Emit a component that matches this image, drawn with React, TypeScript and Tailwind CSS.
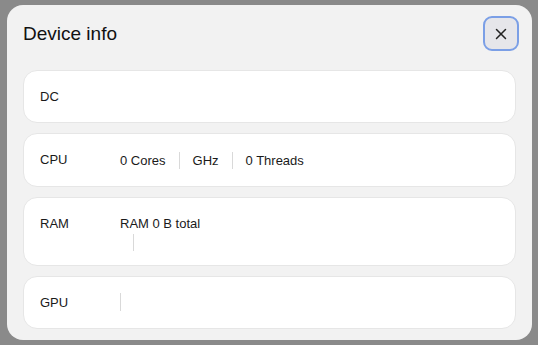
import { X } from "lucide-react";

type Row = { label: string; items: string[]; wrapSep?: boolean };

const rows: Row[] = [
  { label: "DC", items: [] },
  { label: "CPU", items: ["0 Cores", "GHz", "0 Threads"] },
  { label: "RAM", items: ["RAM 0 B total"], wrapSep: true },
  { label: "GPU", items: [""] },
];

function InfoRow({ row }: { row: Row }) {
  return (
    <div
      className={`flex rounded-[14px] border border-[#e6e6e6] bg-white px-4 pt-[18px] text-[13px] leading-4 text-[#1a1a1a] ${
        row.wrapSep ? "pb-[14px]" : "pb-[17px]"
      }`}
    >
      <div className="w-[80px] shrink-0">{row.label}</div>
      {row.label === "GPU" ? (
        <div className="-my-[2px] h-[18px] w-px bg-[#d9d9d9]" />
      ) : row.wrapSep ? (
        <div className="flex flex-col">
          <span>{row.items[0]}</span>
          <div className="ml-[13px] mt-[2px] h-[17px] w-px bg-[#d9d9d9]" />
        </div>
      ) : (
        <div className="flex items-center">
          {row.items.map((item, i) => (
            <div key={item} className="flex items-center">
              {i > 0 && <div className="mx-[13px] h-[17px] w-px bg-[#d9d9d9]" />}
              <span>{item}</span>
            </div>
          ))}
        </div>
      )}
    </div>
  );
}

export default function App() {
  return (
    <div className="h-[345px] w-[538px] bg-[#8a8a8a] px-[7px] pt-[5px] font-['Liberation_Sans',Arial,sans-serif]">
      <div className="flex h-[335px] w-[525px] flex-col rounded-[16px] bg-[#f2f2f2] px-4 pt-[11px]">
        <div className="flex items-center justify-between">
          <h2 className="pt-[1px] text-[19px] font-normal text-[#111]">Device info</h2>
          <button className="mr-[-3px] flex h-[35px] w-[36px] items-center justify-center rounded-[9px] border-2 border-[#7b9fe6] bg-[#e6e6ea] text-[#222]">
            <X size={18} strokeWidth={2} />
          </button>
        </div>
        <div className="mt-[19px] flex flex-col gap-[10px]">
          {rows.map((row) => (
            <InfoRow key={row.label} row={row} />
          ))}
        </div>
      </div>
    </div>
  );
}
